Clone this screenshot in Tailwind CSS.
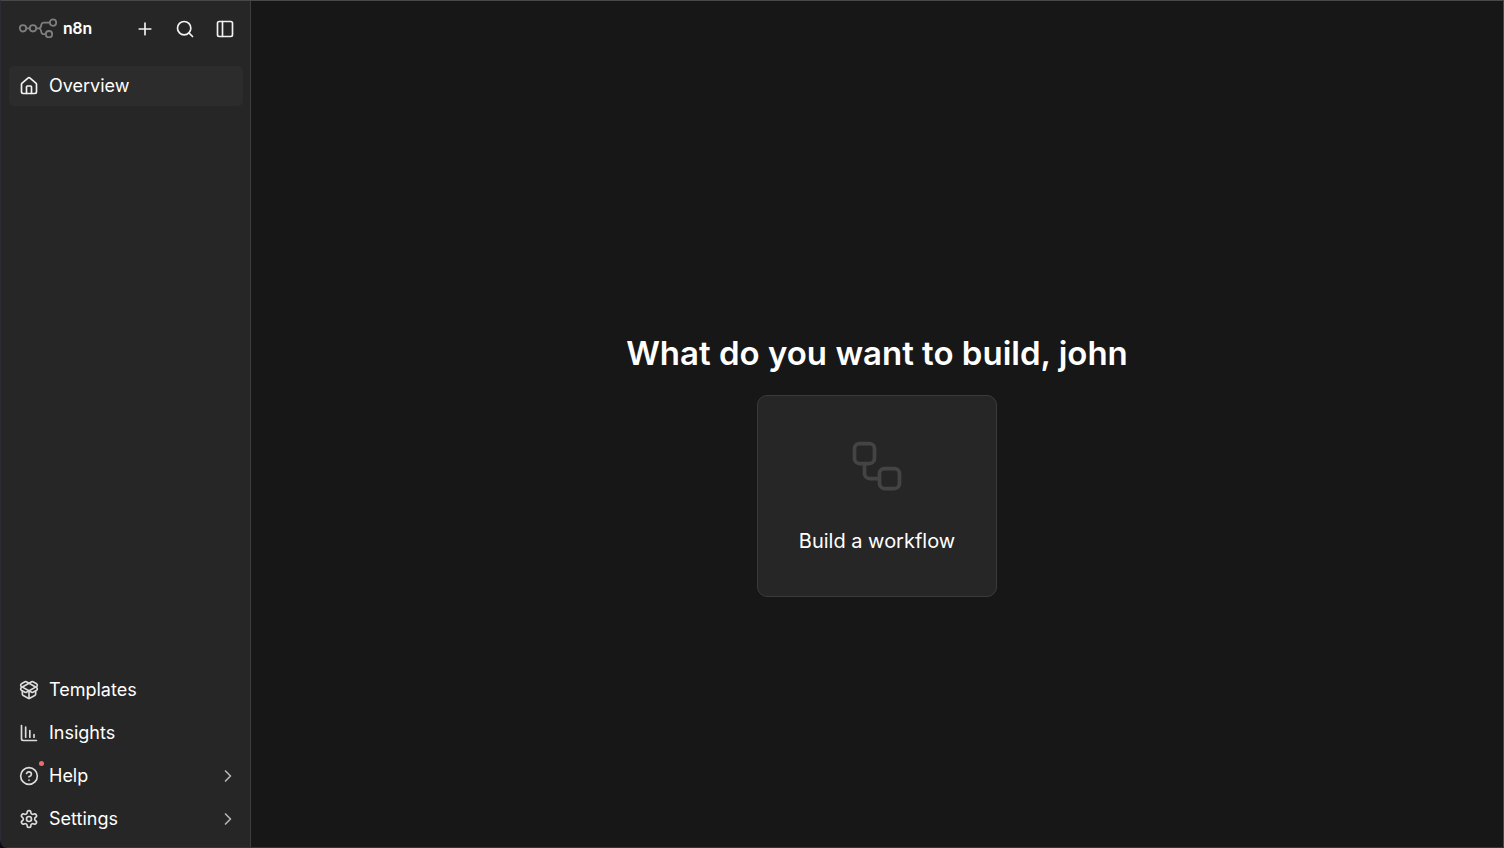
<!DOCTYPE html>
<html lang="en">
<head>
    <meta charset="UTF-8">
    <meta name="viewport" content="width=device-width, initial-scale=1.0">
    <title>n8n</title>
    <script src="https://cdn.jsdelivr.net/npm/@tailwindcss/browser@4"></script>
</head>
<body class="bg-[#0b0b16] font-['Inter',sans-serif] text-white">
<div class="flex h-screen overflow-hidden rounded-bl-lg border border-t-[#484848] border-r-[#484848] border-b-[#353538] border-l-[#2b2b35] bg-[#171717]">
    <aside class="flex w-[250px] shrink-0 flex-col border-r border-[#3d3d3d] bg-[#262626] pr-[7px] pl-2">
        <div class="flex h-14 items-center justify-between pl-[9px]">
            <a href="#" class="flex items-center gap-1.5 pb-0.5" aria-label="n8n home">
                <svg class="h-5 w-[39px]" viewBox="0 0 39 20" fill="none" stroke="#7e7e7e" stroke-width="1.8">
                    <circle cx="5" cy="10.3" r="3.2"/>
                    <circle cx="15" cy="10.3" r="3.2"/>
                    <circle cx="35" cy="4.6" r="3.2"/>
                    <circle cx="31" cy="16.2" r="3.2"/>
                    <path d="M8.2 10.3h3.6M18.2 10.3h2.3c1.4 0 2.2-.8 2.5-2.1l.3-1.4c.3-1.4 1.2-2.2 2.6-2.2h5.9M20.5 10.3c1.4 0 2.1.7 2.4 2l.4 1.8c.3 1.3 1.1 2.1 2.4 2.1h2.1"/>
                </svg>
                <span class="font-['Lato',sans-serif] text-[17px] leading-5 font-bold">n8n</span>
            </a>
            <div class="-mr-0.5 flex">
                <button class="flex size-10 items-center justify-center" aria-label="Create">
                    <svg class="size-5" viewBox="0 0 24 24" fill="none" stroke="#f2f2f2" stroke-width="2" stroke-linecap="round" stroke-linejoin="round"><path d="M5 12h14M12 5v14"/></svg>
                </button>
                <button class="flex size-10 items-center justify-center" aria-label="Search">
                    <svg class="size-5" viewBox="0 0 24 24" fill="none" stroke="#f2f2f2" stroke-width="2" stroke-linecap="round" stroke-linejoin="round"><circle cx="11" cy="11" r="8"/><path d="m21 21-4.3-4.3"/></svg>
                </button>
                <button class="flex size-10 items-center justify-center" aria-label="Toggle sidebar">
                    <svg class="size-5" viewBox="0 0 24 24" fill="none" stroke="#f2f2f2" stroke-width="2" stroke-linecap="round" stroke-linejoin="round"><rect width="18" height="18" x="3" y="3" rx="2"/><path d="M9 3v18"/></svg>
                </button>
            </div>
        </div>

        <nav class="mt-[9px] flex grow flex-col gap-[3px] pb-2 text-[18px] leading-6">
            <a href="#" class="mb-auto flex h-10 items-center gap-2.5 rounded-[5px] bg-[#2c2c2c] px-2.5">
                <svg class="size-5" viewBox="0 0 24 24" fill="none" stroke="#f2f2f2" stroke-width="2" stroke-linecap="round" stroke-linejoin="round"><path d="M15 21v-8a1 1 0 0 0-1-1h-4a1 1 0 0 0-1 1v8"/><path d="M3 10a2 2 0 0 1 .709-1.528l7-5.999a2 2 0 0 1 2.582 0l7 5.999A2 2 0 0 1 21 10v9a2 2 0 0 1-2 2H5a2 2 0 0 1-2-2z"/></svg>
                Overview
            </a>
            <a href="#" class="flex h-10 items-center gap-2.5 px-2.5">
                <svg class="size-5" viewBox="0 0 24 24" fill="none" stroke="#dcdcdc" stroke-width="2" stroke-linecap="round" stroke-linejoin="round"><path d="M12 22v-9"/><path d="M15.17 2.21a1.67 1.67 0 0 1 1.63 0L21 4.57a1.93 1.93 0 0 1 0 3.36L8.82 14.79a1.655 1.655 0 0 1-1.64 0L3 12.43a1.93 1.93 0 0 1 0-3.36z"/><path d="M20 13v3.87a2.06 2.06 0 0 1-1.11 1.83l-6 3.08a1.93 1.93 0 0 1-1.78 0l-6-3.08A2.06 2.06 0 0 1 4 16.87V13"/><path d="M21 12.43a1.93 1.93 0 0 0 0-3.36L8.83 2.2a1.64 1.64 0 0 0-1.63 0L3 4.57a1.93 1.93 0 0 0 0 3.36l12.18 6.86a1.636 1.636 0 0 0 1.63 0z"/></svg>
                Templates
            </a>
            <a href="#" class="flex h-10 items-center gap-2.5 px-2.5">
                <svg class="size-5" viewBox="0 0 24 24" fill="none" stroke="#dcdcdc" stroke-width="2" stroke-linecap="round" stroke-linejoin="round"><path d="M13 17V9M18 17v-3M3 3v16a2 2 0 0 0 2 2h16M8 17V5"/></svg>
                Insights
            </a>
            <button class="flex h-10 items-center gap-2.5 pr-[5px] pl-2.5">
                <span class="relative">
                    <svg class="size-5" viewBox="0 0 24 24" fill="none" stroke="#dcdcdc" stroke-width="2" stroke-linecap="round" stroke-linejoin="round"><circle cx="12" cy="12" r="10"/><path d="M9.09 9a3 3 0 0 1 5.83 1c0 2-3 3-3 3M12 17h.01"/></svg>
                    <span class="absolute -top-[5px] -right-[5px] size-[5px] rounded-full bg-[#f16b6b]"></span>
                </span>
                Help
                <svg class="ml-auto size-5" viewBox="0 0 24 24" fill="none" stroke="#b5b5b5" stroke-width="2" stroke-linecap="round" stroke-linejoin="round"><path d="m9 18 6-6-6-6"/></svg>
            </button>
            <button class="flex h-10 items-center gap-2.5 pr-[5px] pl-2.5">
                <svg class="size-5" viewBox="0 0 24 24" fill="none" stroke="#dcdcdc" stroke-width="2" stroke-linecap="round" stroke-linejoin="round"><path d="M12.22 2h-.44a2 2 0 0 0-2 2v.18a2 2 0 0 1-1 1.73l-.43.25a2 2 0 0 1-2 0l-.15-.08a2 2 0 0 0-2.73.73l-.22.38a2 2 0 0 0 .73 2.73l.15.1a2 2 0 0 1 1 1.72v.51a2 2 0 0 1-1 1.74l-.15.09a2 2 0 0 0-.73 2.73l.22.38a2 2 0 0 0 2.73.73l.15-.08a2 2 0 0 1 2 0l.43.25a2 2 0 0 1 1 1.73V20a2 2 0 0 0 2 2h.44a2 2 0 0 0 2-2v-.18a2 2 0 0 1 1-1.73l.43-.25a2 2 0 0 1 2 0l.15.08a2 2 0 0 0 2.73-.73l.22-.39a2 2 0 0 0-.73-2.73l-.15-.08a2 2 0 0 1-1-1.74v-.5a2 2 0 0 1 1-1.74l.15-.09a2 2 0 0 0 .73-2.73l-.22-.38a2 2 0 0 0-2.73-.73l-.15.08a2 2 0 0 1-2 0l-.43-.25a2 2 0 0 1-1-1.73V4a2 2 0 0 0-2-2z"/><circle cx="12" cy="12" r="3"/></svg>
                Settings
                <svg class="ml-auto size-5" viewBox="0 0 24 24" fill="none" stroke="#b5b5b5" stroke-width="2" stroke-linecap="round" stroke-linejoin="round"><path d="m9 18 6-6-6-6"/></svg>
            </button>
        </nav>
    </aside>

    <main class="flex grow flex-col items-center justify-center gap-5 pt-20">
        <h1 class="text-[33px] leading-[44px] font-semibold">What do you want to build, john</h1>
        <button class="flex w-60 flex-col items-center gap-8 rounded-[10px] border border-[#3b3b3b] bg-[#262626] px-10 pt-10 pb-[42px]">
            <svg class="size-[60px]" viewBox="0 0 24 24" fill="none" stroke="#444444" stroke-width="1.5" stroke-linecap="round" stroke-linejoin="round"><rect width="8" height="8" x="3" y="3" rx="2"/><path d="M7 11v4a2 2 0 0 0 2 2h4"/><rect width="8" height="8" x="13" y="13" rx="2"/></svg>
            <span class="text-xl leading-[26px]">Build a workflow</span>
        </button>
    </main>
</div>
</body>
</html>
